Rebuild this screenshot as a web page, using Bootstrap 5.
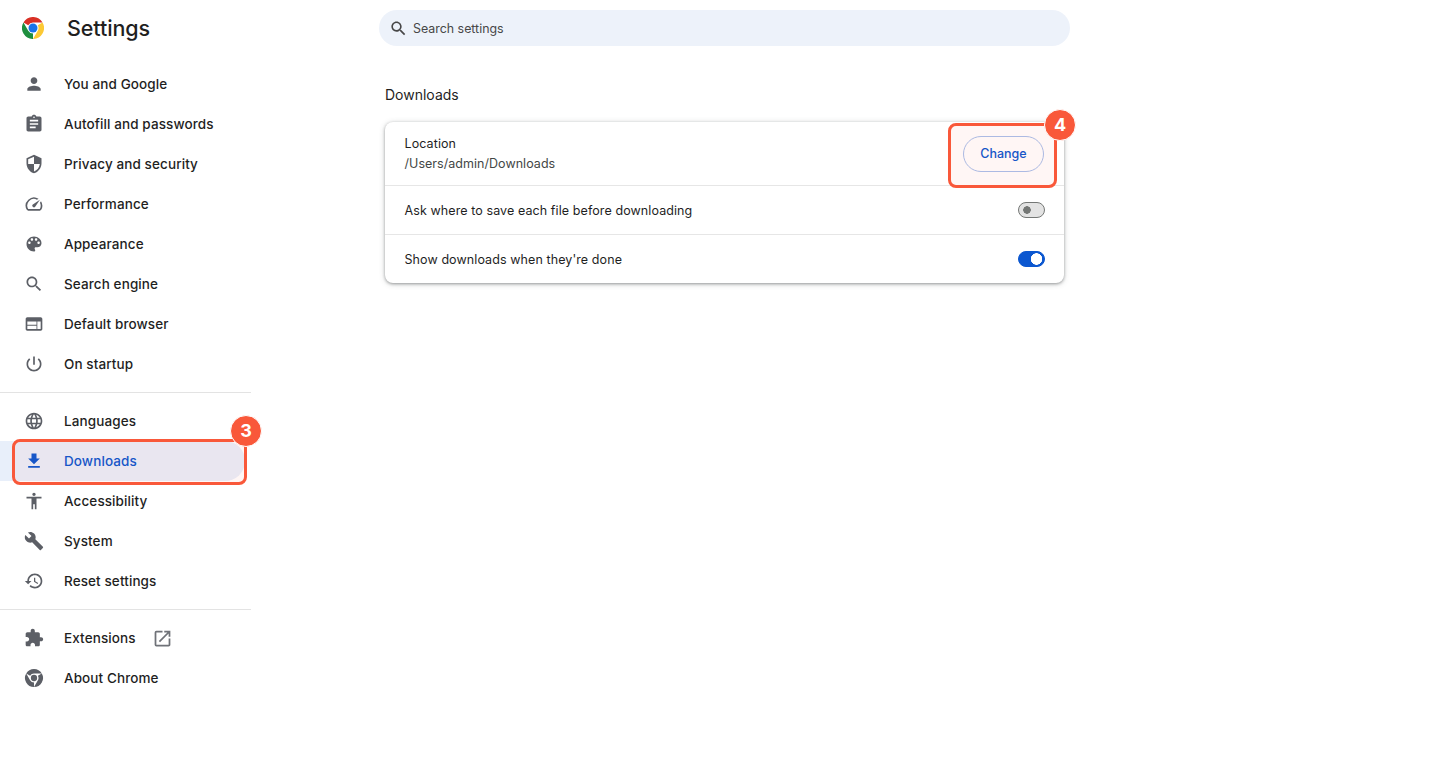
<!DOCTYPE html>
<html lang="en">
<head>
  <meta charset="UTF-8"/>
  <meta name="viewport" content="width=device-width, initial-scale=1.0"/>
  <title>Settings</title>
  <link href="https://cdn.jsdelivr.net/npm/bootstrap@5.3.0/dist/css/bootstrap.min.css" rel="stylesheet">
  <style>
    body {
      background: #fff;
      color: #1f1f1f;
      font-family: "Inter", "Liberation Sans", sans-serif;
      font-size: 13.5px;
      line-height: 20px;
    }
    .side-col { width: 251px; }
    .brand-row { height: 56px; padding-left: 22px; }
    .brand-row svg { width: 22px; height: 22px; }
    .brand-name { margin-left: 23px; font-size: 21.5px; line-height: 28px; font-weight: 500; letter-spacing: -.1px; }
    .side-link {
      position: relative;
      height: 40px;
      width: 245px;
      padding: 0 0 0 24px;
      color: #1f1f1f;
      font-weight: 500;
      letter-spacing: .1px;
      border-radius: 0 20px 20px 0;
    }
    .side-link svg { width: 20px; height: 20px; fill: #5c5f66; margin-right: 20px; flex: none; }
    .side-link.is-current { background: #e8effa; color: #0b57d0; }
    .side-link.is-current svg { fill: #0b57d0; }
    .side-link .out-icon { width: 21px; height: 21px; margin: 0 0 0 16px; fill: #6f7278; }
    .side-rule { margin: 8px 0; border-color: #e3e3e3; opacity: 1; }
    .main-col { width: 691px; margin-left: 128px; padding-top: 10px; }
    .search-pill {
      height: 36px;
      background: #edf2fa;
      border-radius: 18px;
      padding-left: 10px;
      padding-top: 1px;
      color: #474747;
      font-size: 12.4px;
    }
    .search-pill svg { width: 19px; height: 19px; fill: #474747; margin-right: 5px; }
    .page-title { margin: 39px 0 17px 6px; font-size: 14px; line-height: 20px; font-weight: 400; }
    .panel {
      width: 679px;
      margin-left: 6px;
      border: 0;
      border-radius: 8px;
      box-shadow: 0 1px 3px rgba(60, 64, 67, .45), 0 1px 6px rgba(60, 64, 67, .2);
    }
    .panel-row { padding: 0 19px 0 20px; height: 49px; font-size: 12.5px; letter-spacing: .09px; }
    .panel-row + .panel-row { border-top: 1px solid #e6e6e6; }
    .panel-row.tall { height: 63px; }
    .path-text { color: #444746; letter-spacing: .04px; }
    .row-text { margin-left: -.5px; }
    .row-label { padding-top: 2px; }
    .change-btn {
      width: 81px;
      height: 36px;
      margin-right: 1px;
      padding: 1px 0 0;
      border: 1px solid #a8c0ec;
      border-radius: 18px;
      color: #0b57d0;
      background: transparent;
      font-size: 12.5px;
      font-weight: 500;
    }
    .change-btn:hover { color: #0b57d0; border-color: #a8c0ec; }
    .switch-box { min-height: 0; margin: 0; padding: 0; }
    .form-switch .form-check-input.tgl {
      float: none;
      display: block;
      width: 27px;
      height: 16px;
      margin: 0;
      border: 1px solid #747775;
      border-radius: 8px;
      background-color: #e3e3e3;
      background-image: radial-gradient(circle at 8px 50%, #747775 3.5px, transparent 4px);
      background-size: 100% 100%;
      background-position: 0 0;
      box-shadow: none;
    }
    .form-switch .form-check-input.tgl:checked {
      border-color: #0b57d0;
      background-color: #0b57d0;
      background-image: radial-gradient(circle at 17.5px 50%, #fff 5.5px, transparent 6px);
      background-size: 100% 100%;
      background-position: 0 0;
    }
    .callout {
      position: absolute;
      border: 3px solid #f9583a;
      border-radius: 8px;
      background: rgba(249, 88, 58, .05);
    }
    .callout-nav { left: 12px; top: -2px; width: 235px; height: 46px; }
    .callout-btn { left: 948px; top: 123px; width: 109px; height: 65px; }
    .step-dot {
      position: absolute;
      width: 32px;
      height: 32px;
      display: flex;
      align-items: center;
      justify-content: center;
      border: 1px solid #fff;
      border-radius: 50%;
      background: #f9583a;
      color: #fff;
      font-size: 18px;
      font-weight: 700;
      letter-spacing: 0;
    }
    .dot-nav { left: 230px; top: -26px; }
    .dot-btn { left: 1044px; top: 109px; }
  </style>
</head>
<body>
  <div class="d-flex position-relative">
    <div class="side-col flex-shrink-0">
      <div class="brand-row d-flex align-items-center">
        <svg viewBox="0 0 24 24">
          <circle cx="12" cy="12" r="6" fill="#fff"/>
          <path fill="#d93025" d="M1.6 6A12 12 0 0 1 22.4 6H12A6 6 0 0 0 6.8 9Z"/>
          <path fill="#fcc934" d="M1.6 6A12 12 0 0 1 22.4 6H12A6 6 0 0 0 6.8 9Z" transform="rotate(120 12 12)"/>
          <path fill="#1e8e3e" d="M1.6 6A12 12 0 0 1 22.4 6H12A6 6 0 0 0 6.8 9Z" transform="rotate(240 12 12)"/>
          <circle cx="12" cy="12" r="4.9" fill="#1a73e8"/>
        </svg>
        <h1 class="brand-name mb-0">Settings</h1>
      </div>
      <nav class="nav flex-column mt-2">
        <a class="nav-link side-link d-flex align-items-center" href="#"><svg viewBox="0 0 24 24"><path d="M12 12c2.21 0 4-1.79 4-4s-1.79-4-4-4-4 1.79-4 4 1.79 4 4 4zm0 2c-2.67 0-8 1.34-8 4v2h16v-2c0-2.66-5.33-4-8-4z"/></svg>You and Google</a>
        <a class="nav-link side-link d-flex align-items-center" href="#"><svg viewBox="0 0 24 24"><path d="M19 3h-4.18C14.4 1.84 13.3 1 12 1c-1.3 0-2.4.84-2.82 2H5c-1.1 0-2 .9-2 2v14c0 1.1.9 2 2 2h14c1.1 0 2-.9 2-2V5c0-1.1-.9-2-2-2zm-7 0c.55 0 1 .45 1 1s-.45 1-1 1-1-.45-1-1 .45-1 1-1zm2 14H7v-2h7v2zm3-4H7v-2h10v2zm0-4H7V7h10v2z"/></svg>Autofill and passwords</a>
        <a class="nav-link side-link d-flex align-items-center" href="#"><svg viewBox="0 0 24 24"><path d="M12 1L3 5v6c0 5.55 3.84 10.74 9 12 5.16-1.26 9-6.45 9-12V5l-9-4zm0 10.99h7c-.53 4.12-3.28 7.79-7 8.94V12H5V6.3l7-3.11v8.8z"/></svg>Privacy and security</a>
        <a class="nav-link side-link d-flex align-items-center" href="#"><svg viewBox="0 0 24 24"><path d="M20.38 8.57l-1.23 1.85a8 8 0 0 1-.22 7.58H5.07A8 8 0 0 1 15.58 6.85l1.85-1.23A10 10 0 0 0 3.35 19a2 2 0 0 0 1.72 1h13.85a2 2 0 0 0 1.74-1 10 10 0 0 0-.27-10.44zm-9.79 6.84a2 2 0 0 0 2.83 0l5.66-8.49-8.49 5.66a2 2 0 0 0 0 2.83z"/></svg>Performance</a>
        <a class="nav-link side-link d-flex align-items-center" href="#"><svg viewBox="0 0 24 24"><path d="M12 3c-4.97 0-9 4.03-9 9s4.03 9 9 9c.83 0 1.5-.67 1.5-1.5 0-.39-.15-.74-.39-1.01-.23-.26-.38-.61-.38-.99 0-.83.67-1.5 1.5-1.5H16c2.76 0 5-2.24 5-5 0-4.42-4.03-8-9-8zm-5.5 9c-.83 0-1.5-.67-1.5-1.5S5.67 9 6.5 9 8 9.67 8 10.5 7.33 12 6.5 12zm3-4C8.67 8 8 7.33 8 6.5S8.67 5 9.5 5s1.5.67 1.5 1.5S10.33 8 9.5 8zm5 0c-.83 0-1.5-.67-1.5-1.5S13.67 5 14.5 5s1.5.67 1.5 1.5S15.33 8 14.5 8zm3 4c-.83 0-1.5-.67-1.5-1.5S16.67 9 17.5 9s1.5.67 1.5 1.5-.67 1.5-1.5 1.5z"/></svg>Appearance</a>
        <a class="nav-link side-link d-flex align-items-center" href="#"><svg viewBox="0 0 24 24"><path d="M15.5 14h-.79l-.28-.27C15.41 12.59 16 11.11 16 9.5 16 5.91 13.09 3 9.5 3S3 5.91 3 9.5 5.91 16 9.5 16c1.61 0 3.09-.59 4.23-1.57l.27.28v.79l5 4.99L20.49 19l-4.99-5zm-6 0C7.01 14 5 11.99 5 9.5S7.01 5 9.5 5 14 7.01 14 9.5 11.99 14 9.5 14z"/></svg>Search engine</a>
        <a class="nav-link side-link d-flex align-items-center" href="#"><svg viewBox="0 0 24 24"><path d="M20 4H4c-1.1 0-1.99.9-1.99 2L2 18c0 1.1.9 2 2 2h16c1.1 0 2-.9 2-2V6c0-1.1-.9-2-2-2zm-5 14H4v-4h11v4zm0-5H4V9h11v4zm5 5h-4V9h4v9z"/></svg>Default browser</a>
        <a class="nav-link side-link d-flex align-items-center" href="#"><svg viewBox="0 0 24 24"><path d="M13 3h-2v10h2V3zm4.83 2.17l-1.42 1.42C17.99 7.86 19 9.81 19 12c0 3.87-3.13 7-7 7s-7-3.13-7-7c0-2.19 1.01-4.14 2.58-5.42L6.17 5.17C4.23 6.82 3 9.26 3 12c0 4.97 4.03 9 9 9s9-4.03 9-9c0-2.74-1.23-5.18-3.17-6.83z"/></svg>On startup</a>
        <hr class="side-rule">
        <a class="nav-link side-link d-flex align-items-center" href="#"><svg viewBox="0 0 24 24"><path d="M11.99 2C6.47 2 2 6.48 2 12s4.47 10 9.99 10C17.52 22 22 17.52 22 12S17.52 2 11.99 2zm6.93 6h-2.95c-.32-1.25-.78-2.45-1.38-3.56 1.84.63 3.37 1.91 4.33 3.56zM12 4.04c.83 1.2 1.48 2.53 1.91 3.96h-3.82c.43-1.43 1.08-2.76 1.91-3.96zM4.26 14C4.1 13.36 4 12.69 4 12s.1-1.36.26-2h3.38c-.08.66-.14 1.32-.14 2 0 .68.06 1.34.14 2H4.26zm.82 2h2.95c.32 1.25.78 2.45 1.38 3.56-1.84-.63-3.37-1.9-4.33-3.56zm2.95-8H5.08c.96-1.66 2.49-2.93 4.33-3.56C8.81 5.55 8.35 6.75 8.03 8zM12 19.96c-.83-1.2-1.48-2.53-1.91-3.96h3.82c-.43 1.43-1.08 2.76-1.91 3.96zM14.34 14H9.66c-.09-.66-.16-1.32-.16-2 0-.68.07-1.35.16-2h4.68c.09.65.16 1.32.16 2 0 .68-.07 1.34-.16 2zm.25 5.56c.6-1.11 1.06-2.31 1.38-3.56h2.95c-.96 1.65-2.49 2.93-4.33 3.56zM16.36 14c.08-.66.14-1.32.14-2 0-.68-.06-1.34-.14-2h3.38c.16.64.26 1.31.26 2s-.1 1.36-.26 2h-3.38z"/></svg>Languages</a>
        <a class="nav-link side-link is-current d-flex align-items-center" href="#">
          <svg viewBox="0 0 24 24"><path d="M19 9h-4V3H9v6H5l7 7 7-7zM5 18v2h14v-2H5z"/></svg>Downloads
          <span class="callout callout-nav"></span>
          <span class="step-dot dot-nav">3</span>
        </a>
        <a class="nav-link side-link d-flex align-items-center" href="#"><svg viewBox="0 0 24 24"><path d="M12 2c1.1 0 2 .9 2 2s-.9 2-2 2-2-.9-2-2 .9-2 2-2zm9 7h-6v13h-2v-6h-2v6H9V9H3V7h18v2z"/></svg>Accessibility</a>
        <a class="nav-link side-link d-flex align-items-center" href="#"><svg viewBox="0 0 24 24"><path d="M22.7 19l-9.1-9.1c.9-2.3.4-5-1.5-6.9-2-2-5-2.4-7.4-1.3L9 6 6 9 1.6 4.7C.4 7.1.9 10.1 2.9 12.1c1.9 1.9 4.6 2.4 6.9 1.5l9.1 9.1c.4.4 1 .4 1.4 0l2.3-2.3c.5-.4.5-1.1.1-1.4z"/></svg>System</a>
        <a class="nav-link side-link d-flex align-items-center" href="#"><svg viewBox="0 0 24 24"><path d="M13 3c-4.97 0-9 4.03-9 9H1l3.89 3.89.07.14L9 12H6c0-3.87 3.13-7 7-7s7 3.13 7 7-3.13 7-7 7c-1.93 0-3.68-.79-4.94-2.06l-1.42 1.42C8.27 19.99 10.51 21 13 21c4.97 0 9-4.03 9-9s-4.03-9-9-9zm-1 5v5l4.28 2.54.72-1.21-3.5-2.08V8H12z"/></svg>Reset settings</a>
        <hr class="side-rule">
        <a class="nav-link side-link d-flex align-items-center" href="#"><svg viewBox="0 0 24 24"><path d="M20.5 11H19V7c0-1.1-.9-2-2-2h-4V3.5C13 2.12 11.88 1 10.5 1S8 2.12 8 3.5V5H4c-1.1 0-1.99.9-1.99 2v3.8H3.5c1.49 0 2.7 1.21 2.7 2.7s-1.21 2.7-2.7 2.7H2V20c0 1.1.9 2 2 2h3.8v-1.5c0-1.49 1.21-2.7 2.7-2.7 1.49 0 2.7 1.21 2.7 2.7V22H17c1.1 0 2-.9 2-2v-4h1.5c1.38 0 2.5-1.12 2.5-2.5S21.88 11 20.5 11z"/></svg>Extensions<svg class="out-icon" viewBox="0 0 24 24"><path d="M19 19H5V5h7V3H5a2 2 0 0 0-2 2v14a2 2 0 0 0 2 2h14c1.1 0 2-.9 2-2v-7h-2v7zM14 3v2h3.59l-9.83 9.83 1.41 1.41L19 6.41V10h2V3h-7z"/></svg></a>
        <a class="nav-link side-link d-flex align-items-center" href="#"><svg viewBox="0 0 24 24">
          <g transform="translate(1.2 1.2) scale(.9)">
            <path d="M1.6 6A12 12 0 0 1 22.4 6H12A6 6 0 0 0 6.800 9Z"/>
            <path d="M1.6 6A12 12 0 0 1 22.4 6H12A6 6 0 0 0 6.800 9Z" transform="rotate(120 12 12)"/>
            <path d="M1.6 6A12 12 0 0 1 22.4 6H12A6 6 0 0 0 6.800 9Z" transform="rotate(240 12 12)"/>
            <circle cx="12" cy="12" r="4.2"/>
          </g>
        </svg>About Chrome</a>
      </nav>
    </div>
    <main class="main-col flex-shrink-0">
      <div class="search-pill d-flex align-items-center">
        <svg viewBox="0 0 24 24"><path d="M15.5 14h-.79l-.28-.27C15.41 12.59 16 11.11 16 9.5 16 5.91 13.09 3 9.5 3S3 5.91 3 9.5 5.91 16 9.5 16c1.61 0 3.09-.59 4.23-1.57l.27.28v.79l5 4.99L20.49 19l-4.99-5zm-6 0C7.01 14 5 11.99 5 9.5S7.01 5 9.5 5 14 7.01 14 9.5 11.99 14 9.5 14z"/></svg>
        Search settings
      </div>
      <h2 class="page-title">Downloads</h2>
      <div class="card panel">
        <div class="panel-row tall d-flex align-items-center justify-content-between">
          <div class="row-text">
            <div>Location</div>
            <div class="path-text">/Users/admin/Downloads</div>
          </div>
          <button type="button" class="btn change-btn">Change</button>
        </div>
        <div class="panel-row d-flex align-items-center justify-content-between">
          <span class="row-text row-label">Ask where to save each file before downloading</span>
          <div class="form-check form-switch switch-box"><input class="form-check-input tgl" type="checkbox" role="switch" aria-label="Ask where to save"></div>
        </div>
        <div class="panel-row d-flex align-items-center justify-content-between">
          <span class="row-text row-label">Show downloads when they're done</span>
          <div class="form-check form-switch switch-box"><input class="form-check-input tgl" type="checkbox" role="switch" aria-label="Show downloads" checked></div>
        </div>
      </div>
    </main>
    <span class="callout callout-btn"></span>
    <span class="step-dot dot-btn">4</span>
  </div>
  <script src="https://cdn.jsdelivr.net/npm/bootstrap@5.3.0/dist/js/bootstrap.bundle.min.js"></script>
</body>
</html>
